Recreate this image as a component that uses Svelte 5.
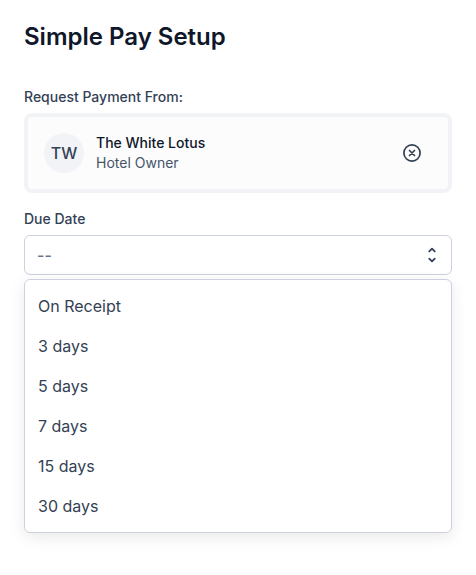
<script lang="ts">
  const payer = {
    initials: 'TW',
    name: 'The White Lotus',
    role: 'Hotel Owner'
  };

  const options = ['On Receipt', '3 days', '5 days', '7 days', '15 days', '30 days'];

  let hasPayer = $state(true);
  let open = $state(true);
  let selected = $state('');

  function choose(option: string) {
    selected = option;
    open = false;
  }
</script>

<main class="setup">
  <h1>Simple Pay Setup</h1>

  <div class="label">Request Payment From:</div>
  {#if hasPayer}
    <div class="payer">
      <div class="avatar">{payer.initials}</div>
      <div class="details">
        <div class="name">{payer.name}</div>
        <div class="role">{payer.role}</div>
      </div>
      <button class="remove" aria-label="Remove payer" onclick={() => (hasPayer = false)}>
        <svg width="20" height="20" viewBox="0 0 20 20" fill="none" stroke="currentColor" stroke-width="1.7" stroke-linecap="round" stroke-linejoin="round">
          <circle cx="10" cy="10" r="8.1" />
          <path d="M12.5 7.5l-5 5M7.5 7.5l5 5" />
        </svg>
      </button>
    </div>
  {/if}

  <div class="label due">Due Date</div>
  <div class="select">
    <button class="trigger" aria-label="Due date" aria-expanded={open} onclick={() => (open = !open)}>
      <span class="value" class:placeholder={!selected}>{selected || '--'}</span>
      <svg width="20" height="20" viewBox="0 0 20 20" fill="none" stroke="currentColor" stroke-width="1.8" stroke-linecap="round" stroke-linejoin="round">
        <path d="M7.3 6.4L10 3.7l2.7 2.7M7.3 13.6l2.7 2.7 2.7-2.7" />
      </svg>
    </button>

    {#if open}
      <div class="menu" role="listbox">
        {#each options as option}
          <button class="option" role="option" aria-selected={option === selected} onclick={() => choose(option)}>
            {option}
          </button>
        {/each}
      </div>
    {/if}
  </div>
</main>

<style>
  :global(body) {
    background: #ffffff;
  }

  .setup {
    box-sizing: border-box;
    min-height: 575px;
    padding: 21px 24px;
    font-family: Inter, sans-serif;
    color: #334155;
  }

  button {
    padding: 0;
    border: 0;
    background: none;
    font: inherit;
    color: inherit;
    text-align: left;
    cursor: pointer;
  }

  svg {
    display: block;
    flex: none;
  }

  h1 {
    margin: 0 0 34px;
    font-size: 24px;
    line-height: 32px;
    font-weight: 600;
    color: #0f172a;
  }

  .label {
    margin-bottom: 6px;
    font-size: 14px;
    line-height: 20px;
    font-weight: 500;
  }

  .due {
    margin-top: 16px;
  }

  .payer {
    display: flex;
    align-items: center;
    gap: 12px;
    box-sizing: border-box;
    height: 80px;
    padding: 0 26px 0 16px;
    border: 4px solid #f2f3f7;
    border-radius: 8px;
    background: #fcfcfc;
  }

  .avatar {
    display: flex;
    align-items: center;
    justify-content: center;
    width: 40px;
    height: 40px;
    border-radius: 50%;
    background: #f2f3f7;
    font-size: 16px;
    font-weight: 500;
  }

  .details {
    flex: 1;
    font-size: 14px;
    line-height: 20px;
  }

  .name {
    font-weight: 500;
    color: #0f172a;
  }

  .role {
    color: #475569;
  }

  .select {
    position: relative;
  }

  .trigger {
    display: flex;
    align-items: center;
    justify-content: space-between;
    box-sizing: border-box;
    width: 100%;
    height: 40px;
    padding: 0 9px 0 12px;
    border: 1px solid #cbd1de;
    border-radius: 6px;
    font-size: 16px;
    line-height: 24px;
  }

  .placeholder {
    font-weight: 500;
    color: #64748b;
  }

  .menu {
    position: absolute;
    top: calc(100% + 4px);
    left: 0;
    right: 0;
    padding: 6px 0;
    border: 1px solid #cbd1de;
    border-radius: 6px;
    background: #ffffff;
    box-shadow: 0 4px 16px rgba(0, 0, 0, 0.09);
  }

  .option {
    display: block;
    width: 100%;
    padding: 8px 13px;
    font-size: 16px;
    line-height: 24px;
  }
</style>
